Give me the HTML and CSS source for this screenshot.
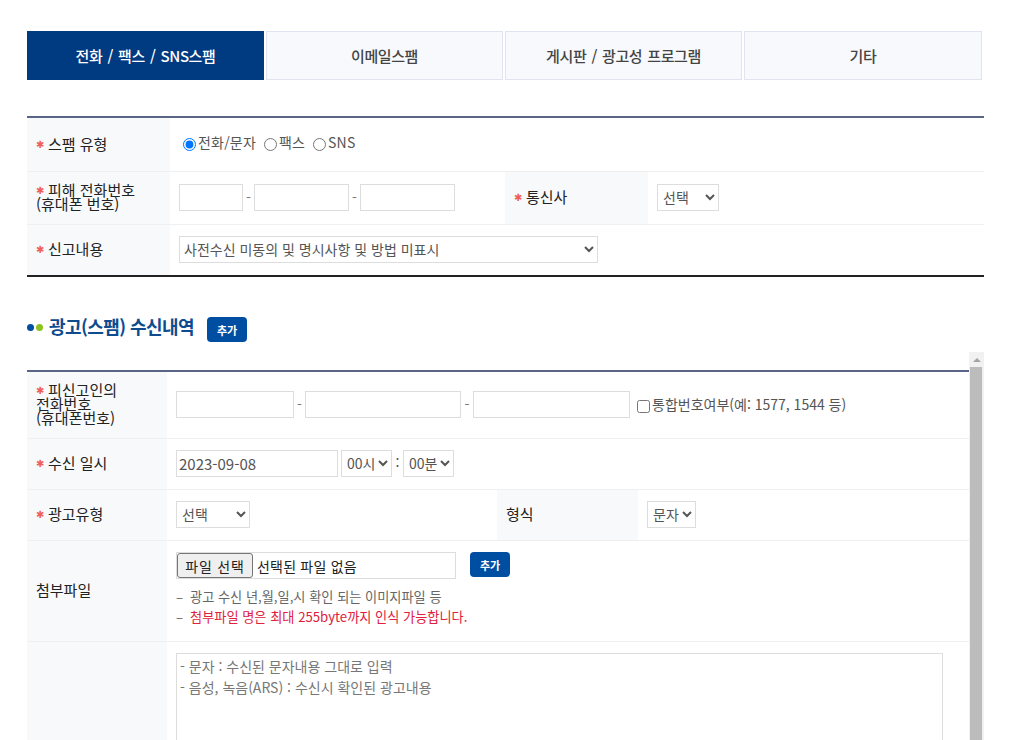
FILE: index.html
```html
<!DOCTYPE html>
<html lang="ko">
<head>
<meta charset="utf-8">
<title>스팸 신고</title>
<link rel="stylesheet" href="styles.css">
</head>
<body>
<main class="page">
  <nav class="tabs">
    <a class="tab active">전화 / 팩스 / SNS스팸</a>
    <a class="tab">이메일스팸</a>
    <a class="tab">게시판 / 광고성 프로그램</a>
    <a class="tab">기타</a>
  </nav>

  <table class="form form-top">
    <colgroup><col class="c1"><col class="c2"><col class="c3"><col></colgroup>
    <tr class="r54">
      <th><i>✱</i>스팸 유형</th>
      <td colspan="3" class="radios">
        <label><input type="radio" name="t" checked>전화/문자</label>
        <label><input type="radio" name="t">팩스</label>
        <label><input type="radio" name="t">SNS</label>
      </td>
    </tr>
    <tr class="r53">
      <th><i>✱</i>피해 전화번호<br>(휴대폰 번호)</th>
      <td>
        <div class="phone">
          <input class="w64" type="text"><span>-</span><input class="w95" type="text"><span>-</span><input class="w95" type="text">
        </div>
      </td>
      <th><i>✱</i>통신사</th>
      <td><select class="sel w62"><option>선택</option></select></td>
    </tr>
    <tr class="r50">
      <th><i>✱</i>신고내용</th>
      <td colspan="3"><select class="sel w419"><option>사전수신 미동의 및 명시사항 및 방법 미표시</option></select></td>
    </tr>
  </table>

  <div class="section-head">
    <span class="dots"><b></b><b></b></span>
    <h2>광고(스팸) 수신내역</h2>
    <button class="btn" type="button">추가</button>
  </div>

  <div class="scroller">
    <div class="scroll-content">
      <table class="form form-inner">
        <colgroup><col class="d1"><col class="d2"><col class="d3"><col></colgroup>
        <tr class="r67">
          <th><i>✱</i>피신고인의<br>전화번호<br>(휴대폰번호)</th>
          <td colspan="3">
            <div class="phone">
              <input class="w118" type="text"><span>-</span><input class="w156" type="text"><span class="wide">-</span><input class="w157" type="text">
              <label class="check"><input type="checkbox">통합번호여부(예: 1577, 1544 등)</label>
            </div>
          </td>
        </tr>
        <tr class="r51">
          <th><i>✱</i>수신 일시</th>
          <td colspan="3">
            <div class="when">
              <input class="w162 date" type="text" value="2023-09-08">
              <select class="sel w51"><option>00시</option></select>
              <span>:</span>
              <select class="sel w51"><option>00분</option></select>
            </div>
          </td>
        </tr>
        <tr class="r51">
          <th><i>✱</i>광고유형</th>
          <td><select class="sel w74"><option>선택</option></select></td>
          <th>형식</th>
          <td><select class="sel w49"><option>문자</option></select></td>
        </tr>
        <tr class="r101">
          <th>첨부파일</th>
          <td colspan="3" class="file-cell">
            <div class="file-row">
              <div class="file-box"><span class="file-btn">파일 선택</span><span class="file-name">선택된 파일 없음</span></div>
              <button class="btn" type="button">추가</button>
            </div>
            <ul class="notes">
              <li>광고 수신 년,월,일,시 확인 되는 이미지파일 등</li>
              <li class="red">첨부파일 명은 최대 255byte까지 인식 가능합니다.</li>
            </ul>
          </td>
        </tr>
        <tr>
          <th></th>
          <td colspan="3" class="area-cell"><textarea class="area" placeholder="- 문자 : 수신된 문자내용 그대로 입력&#10;- 음성, 녹음(ARS) : 수신시 확인된 광고내용"></textarea></td>
        </tr>
      </table>
    </div>
    <div class="scrollbar"><span class="arrow"></span><span class="thumb"></span></div>
  </div>
</main>
</body>
</html>
```
FILE: styles.css
```css
* { box-sizing: border-box; }
html, body { margin: 0; height: 740px; overflow: hidden; background: #fff; }
body, input, select, textarea, button {
  font-family: "Noto Sans CJK KR", "Noto Sans", sans-serif;
  font-size: 14px;
  color: #555;
}
.page { padding: 31px 40px 0 27px; }

.tabs { display: grid; grid-template-columns: 237px 237px 237px 238px; gap: 2px; width: 955px; }
.tab {
  height: 49px;
  display: flex;
  align-items: center;
  justify-content: center;
  background: #f7f9fd;
  border: 1px solid #dfe4f0;
  font-size: 15px;
  font-weight: 500;
  letter-spacing: -0.4px;
  word-spacing: 1.3px;
  color: #444;
}
.tab.active { background: #003a80; border-color: #003a80; color: #fff; }

.form { border-collapse: separate; border-spacing: 0; table-layout: fixed; width: 100%; }
.form th {
  background: #f8f9fb;
  text-align: left;
  font-weight: 400;
  font-size: 15px;
  line-height: 14px;
  color: #222;
  padding: 0 0 2px 9px;
  border-bottom: 1px solid #f0f0f0;
}
.form td { padding: 0 0 2px 9px; border-bottom: 1px solid #f0f0f0; }
.form i {
  display: inline-block;
  vertical-align: top;
  width: 12px;
  height: 14px;
  line-height: 15px;
  font-family: "DejaVu Sans", sans-serif;
  font-style: normal;
  font-size: 10px;
  color: #f0605a;
}
.form-top { margin-top: 36px; border-top: 2px solid #5a6484; border-bottom: 2px solid #222; }
.form-top tr:last-child th, .form-top tr:last-child td { border-bottom: 0; }
.c1 { width: 143px; }
.c2 { width: 335px; }
.c3 { width: 143px; }
.r54 { height: 54px; }
.r53 { height: 53px; }
.r50 { height: 50px; }
.r67 { height: 67px; }
.r51 { height: 51px; }
.r101 { height: 101px; }

input[type="text"], .sel {
  height: 27px;
  border: 1px solid #ddd;
  background-color: #fff;
  padding: 0;
  margin: 0;
  border-radius: 0;
  vertical-align: middle;
}
.sel { padding-left: 1px; }
.sel.w419 { padding-left: 0; }
.form td.radios { padding: 0 0 2px 13px; line-height: 20px; }
.radios label { margin-right: 4px; display: inline-flex; align-items: center; letter-spacing: 0.2px; }
.radios input { margin: 4px 2px 0 0; width: 13px; height: 13px; }

.phone { display: flex; align-items: center; gap: 3px; }
.phone span { width: 5px; text-align: center; color: #777; }
.phone span.wide { width: 6px; }
.w64 { width: 64px; }
.w95 { width: 95px; }
.w62 { width: 62px; }
.w419 { width: 419px; }
.w118 { width: 118px; }
.w156 { width: 156px; }
.w157 { width: 157px; }
.w162 { width: 162px; }
.w51 { width: 51px; }
.w74 { width: 74px; }
.w49 { width: 49px; }
.date { font-size: 15px; }
input.date[type="text"] { padding-left: 2px; }
.check { display: inline-flex; align-items: center; margin-left: 4px; line-height: 20px; }
.check input { margin: 4px 2px 0 0; width: 13px; height: 13px; }

.section-head { display: flex; align-items: center; height: 25px; margin-top: 40px; }
.dots { display: flex; gap: 2px; margin-right: 6px; position: relative; top: -2px; }
.dots b { width: 7px; height: 7px; border-radius: 50%; background: #004ea2; }
.dots b + b { background: #8cc21f; }
.section-head h2 {
  margin: 0 13px 0 0;
  font-size: 18px;
  font-weight: 700;
  letter-spacing: -0.55px;
  color: #0f4b8f;
  position: relative;
  top: -4px;
}
.btn {
  width: 40px;
  height: 25px;
  padding: 0;
  border: 0;
  border-radius: 4px;
  background: #004ea2;
  color: #fff;
  font-size: 11px;
  font-weight: 700;
}

.scroller { display: flex; margin-top: 10px; height: 388px; overflow: hidden; }
.scroll-content { flex: 1; padding-top: 18px; min-width: 0; }
.scrollbar { width: 15px; background: #f1f1f1; display: flex; flex-direction: column; align-items: center; }
.arrow { height: 15px; display: flex; align-items: center; }
.arrow::before {
  content: "";
  border-left: 4px solid transparent;
  border-right: 4px solid transparent;
  border-bottom: 4px solid #a3a3a3;
}
.thumb { width: 12px; flex: 1; align-self: flex-start; margin-left: 1px; background: #bcbcbc; }

.form-inner { border-top: 2px solid #5a6484; }
.d1 { width: 140px; }
.d2 { width: 330px; }
.d3 { width: 141px; }

.when { display: flex; align-items: center; gap: 3px; }
.when span { width: 5px; text-align: center; margin: -3px 0 0; }
.form td.file-cell { vertical-align: top; padding-top: 11px; }
.file-row { display: flex; align-items: flex-start; gap: 14px; }
.file-box { width: 280px; height: 27px; border: 1px solid #ddd; display: flex; align-items: center; }
.file-btn {
  width: 76px;
  height: 25px;
  border: 1px solid #767676;
  border-radius: 3px;
  background: #efefef;
  color: #222;
  display: flex;
  align-items: center;
  justify-content: center;
  letter-spacing: 0.8px;
}
.file-name { margin-left: 4px; color: #222; letter-spacing: 0.2px; }
.notes { list-style: none; margin: 8px 0 0; padding: 0; font-size: 13.2px; line-height: 20px; color: #666; }
.notes li { padding-left: 14px; position: relative; }
.notes li::before { content: "–"; position: absolute; left: 0; color: #666; }
.notes li.red { color: #e0203c; }
.form td.area-cell { padding-top: 11px; vertical-align: top; height: 300px; }
.area {
  display: block;
  width: 767px;
  height: 280px;
  border: 1px solid #ddd;
  padding: 2px 3px;
  margin: 0;
  resize: none;
  font-size: 14px;
  line-height: 21px;
}
.area::placeholder { color: #777; opacity: 1; }
```
